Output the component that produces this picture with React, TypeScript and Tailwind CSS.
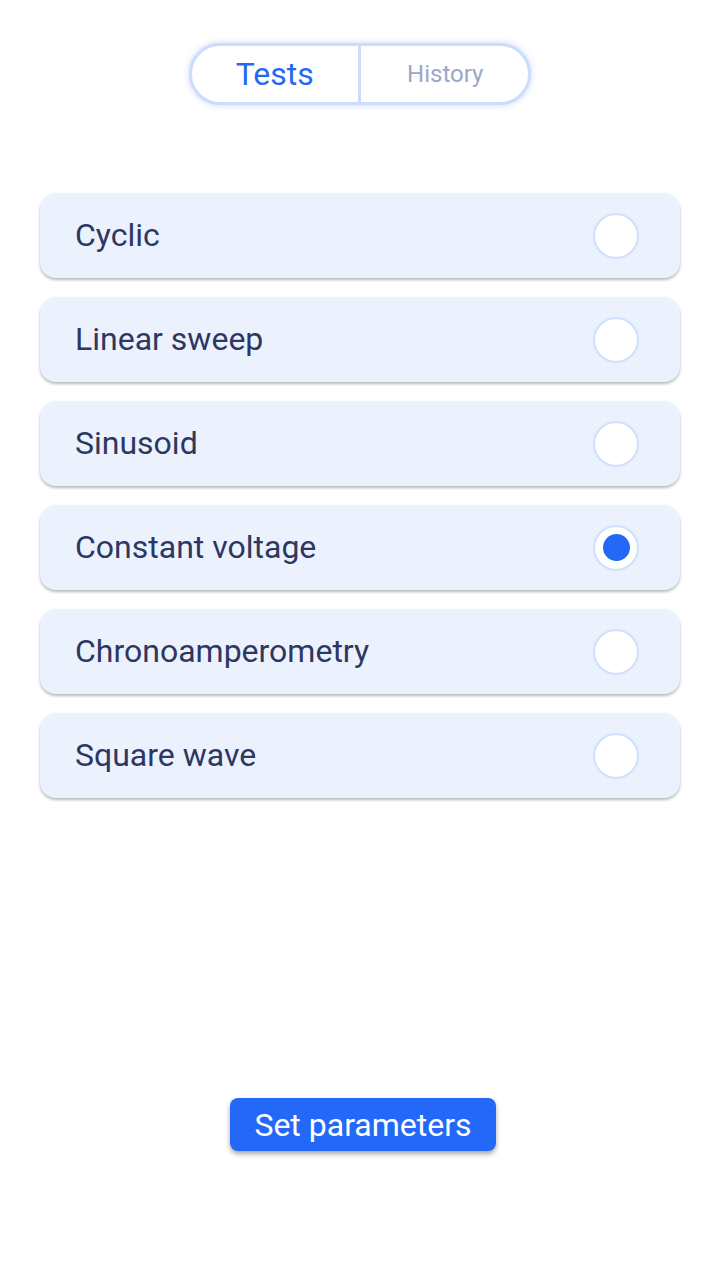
import React, { useState } from "react";

const tests = ["Cyclic", "Linear sweep", "Sinusoid", "Constant voltage", "Chronoamperometry", "Square wave"];

export default function App() {
  const [selected, setSelected] = useState("Constant voltage");

  return (
    <div className="w-[720px] h-[1280px] bg-white flex flex-col items-center font-['Roboto',sans-serif]">
      <div className="mt-[43px] flex w-[342px] h-[62px] rounded-full border-[3px] border-[#cbdcfc] shadow-[0_0_6px_rgba(100,140,240,0.35)] bg-white overflow-hidden">
        <button className="flex-1 flex items-center justify-center text-[32px] text-[#2468f6] pb-[1px]">Tests</button>
        <div className="w-[3px] bg-[#cbdcfc]" />
        <button className="flex-1 flex items-center justify-center text-[24px] text-[#9aa8c8] pl-[2px]">History</button>
      </div>

      <div className="mt-[88px] w-[640px] flex flex-col gap-[19px]">
        {tests.map((t) => (
          <div
            key={t}
            onClick={() => setSelected(t)}
            className="h-[85px] rounded-[16px] bg-[#ebf2fe] shadow-[0_2px_3px_rgba(0,0,0,0.28)] flex items-center justify-between pl-[35px] pr-[41px] cursor-pointer"
          >
            <span className="text-[32px] text-[#2e3662] pb-[2px]">{t}</span>
            <div className="w-[46px] h-[46px] rounded-full bg-white border-2 border-[#cfe0fc] flex items-center justify-center">
              {selected === t && <div className="w-[27px] h-[27px] rounded-full bg-[#2468f6]" />}
            </div>
          </div>
        ))}
      </div>

      <button className="mt-[300px] ml-[6px] w-[266px] h-[53px] rounded-[8px] bg-[#2468f8] text-white text-[32px] shadow-[0_3px_5px_rgba(0,0,0,0.35)]">
        Set parameters
      </button>
    </div>
  );
}
